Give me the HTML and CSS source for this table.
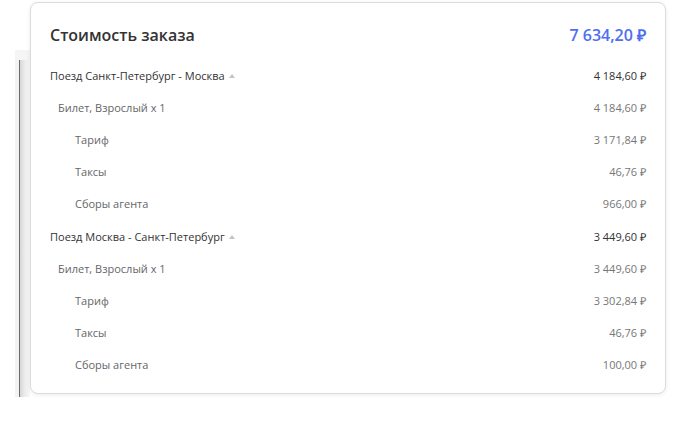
FILE: index.html
```html
<!DOCTYPE html>
<html lang="ru">
<head>
  <meta charset="UTF-8" />
  <title>Стоимость заказа</title>
  <link rel="stylesheet" href="styles.css">
</head>
<body>
  <div class="page">
    <div class="side"></div>
    <div class="card">
      <div class="card-head">
        <h2>Стоимость заказа</h2>
        <div class="total">7 634,20 ₽</div>
      </div>
      <div class="rows">
        <!-- Туда -->
        <div class="row lvl0"><span>Поезд Санкт-Петербург - Москва<i class="caret"></i></span><span class="sum">4 184,60 ₽</span></div>
        <div class="row lvl1"><span>Билет, Взрослый х 1</span><span class="sum">4 184,60 ₽</span></div>
        <div class="row lvl2"><span>Тариф</span><span class="sum">3 171,84 ₽</span></div>
        <div class="row lvl2"><span>Таксы</span><span class="sum">46,76 ₽</span></div>
        <div class="row lvl2"><span>Сборы агента</span><span class="sum">966,00 ₽</span></div>
        <!-- Обратно -->
        <div class="row lvl0"><span>Поезд Москва - Санкт-Петербург<i class="caret"></i></span><span class="sum">3 449,60 ₽</span></div>
        <div class="row lvl1"><span>Билет, Взрослый х 1</span><span class="sum">3 449,60 ₽</span></div>
        <div class="row lvl2"><span>Тариф</span><span class="sum">3 302,84 ₽</span></div>
        <div class="row lvl2"><span>Таксы</span><span class="sum">46,76 ₽</span></div>
        <div class="row lvl2"><span>Сборы агента</span><span class="sum">100,00 ₽</span></div>
      </div>
    </div>
  </div>
</body>
</html>
```

FILE: styles.css
```css
* {
  margin: 0;
  padding: 0;
  box-sizing: border-box;
}
body {
  font-family: 'Open Sans', sans-serif;
  background: #fff;
  color: #333;
}
.page {
  display: flex;
  align-items: flex-start;
  padding: 2px 0 0 15px;
}
/* edge of the panel behind the card */
.side {
  width: 15px;
  height: 347px;
  margin-top: 48px;
  background: linear-gradient(to right, #f3f3f3 0, #f3f3f3 4px, #6a6a72 4px, #6a6a72 5px, #d6d6d6 5px, #e9e9e9 9px, #f8f8f8 15px);
  border-top: 10px solid #f5f5f5;
}
/* Card */
.card {
  width: 636px;
  background: #fff;
  border: 1px solid #dcdcdc;
  border-radius: 8px;
  box-shadow: 0 1px 4px rgba(0, 0, 0, 0.08);
  padding: 19px 19px 12px 19px;
}
.card-head {
  display: flex;
  justify-content: space-between;
  align-items: center;
  height: 26px;
  margin-bottom: 11px;
}
.card-head h2 {
  font-size: 16px;
  font-weight: 600;
  color: #333;
}
.total {
  font-size: 16px;
  font-weight: 600;
  color: #4f6ef0;
}
.row {
  display: flex;
  justify-content: space-between;
  align-items: center;
  height: 32.2px;
  font-size: 11px;
  color: #666;
}
.row .sum {
  color: #777;
}
.lvl0 {
  color: #333;
}
.lvl0 .sum {
  color: #333;
}
.lvl1 {
  padding-left: 8px;
}
.lvl2 {
  padding-left: 25px;
}
.caret {
  display: inline-block;
  width: 0;
  height: 0;
  margin-left: 4px;
  vertical-align: 2px;
  border-left: 3px solid transparent;
  border-right: 3px solid transparent;
  border-bottom: 4px solid #c4c4c4;
}
```
